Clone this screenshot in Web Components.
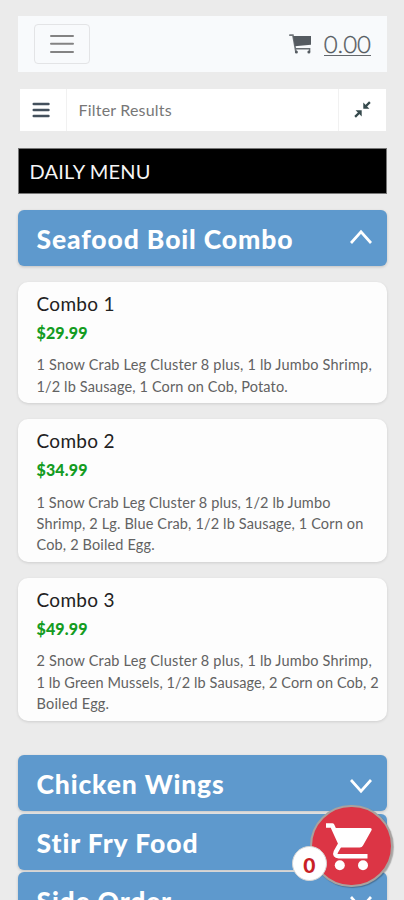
<!DOCTYPE html>
<html lang="en">
<head>
<meta charset="utf-8">
<title>Daily Menu</title>
<style>
html,body{margin:0;height:900px;overflow:hidden}
body{background:#ebebeb;font-family:Lato,"Open Sans",sans-serif}
</style>
</head>
<body>
<menu-page>
  <nav-bar total="0.00"></nav-bar>
  <filter-bar>Filter Results</filter-bar>
  <menu-title>DAILY MENU</menu-title>
  <menu-section open style="--ls:.87px">Seafood Boil Combo</menu-section>
  <menu-item name="Combo 1" price="$29.99">
    <text-line style="--ls:.2px">1 Snow Crab Leg Cluster 8 plus, 1 lb Jumbo Shrimp,</text-line>
    <text-line style="--ls:.13px">1/2 lb Sausage, 1 Corn on Cob, Potato.</text-line>
  </menu-item>
  <menu-item name="Combo 2" price="$34.99">
    <text-line style="--ls:.12px">1 Snow Crab Leg Cluster 8 plus, 1/2 lb Jumbo</text-line>
    <text-line style="--ls:.15px">Shrimp, 2 Lg. Blue Crab, 1/2 lb Sausage, 1 Corn on</text-line>
    <text-line style="--ls:.15px">Cob, 2 Boiled Egg.</text-line>
  </menu-item>
  <menu-item name="Combo 3" price="$49.99">
    <text-line style="--ls:.2px">2 Snow Crab Leg Cluster 8 plus, 1 lb Jumbo Shrimp,</text-line>
    <text-line style="--ls:.09px">1 lb Green Mussels, 1/2 lb Sausage, 2 Corn on Cob, 2</text-line>
    <text-line style="--ls:.2px">Boiled Egg.</text-line>
  </menu-item>
  <menu-section class="first" style="--ls:.85px">Chicken Wings</menu-section>
  <menu-section class="next" style="--ls:.93px">Stir Fry Food</menu-section>
  <menu-section class="next" style="--ls:.8px">Side Order</menu-section>
  <cart-button slot="float">0</cart-button>
</menu-page>
<script>
const define = (name, html, setup) => customElements.define(name, class extends HTMLElement {
  connectedCallback() {
    if (this.shadowRoot) return;
    const t = document.createElement('template');
    t.innerHTML = html;
    this.attachShadow({mode: 'open'}).append(t.content.cloneNode(true));
    if (setup) setup(this, this.shadowRoot);
  }
});

define('menu-page', `<style>
:host{display:block;position:relative;height:900px;overflow:hidden}
main{display:flex;flex-direction:column;padding:16px 17.5px 0 18px}
::slotted(*){flex:none}
::slotted(filter-bar){margin:16.6px 1px 0 1.5px}
::slotted(menu-title){margin-top:17px}
::slotted(menu-section){margin-top:16.4px}
::slotted(menu-item){margin-top:16px}
::slotted(menu-section.first){margin-top:34.4px}
::slotted(menu-section.next){margin-top:2.7px}
</style><main><slot></slot></main><slot name="float"></slot>`);

define('nav-bar', `<style>
:host{display:flex;align-items:center;justify-content:space-between;box-sizing:border-box;height:56px;padding:0 15.5px 0 16px;background:#f8fafc}
button{display:flex;align-items:center;justify-content:center;box-sizing:border-box;width:56px;height:40px;padding:0;border:1px solid #e3e4e6;border-radius:4px;background:none}
.cart{display:flex;align-items:center;gap:12px;color:#555b61}
.total{font-size:24px;line-height:22px;font-weight:300;-webkit-text-stroke:.3px #555b61;border-bottom:1.3px solid #63676c;position:relative;top:.5px}
svg{display:block}
</style>
<button aria-label="Menu"><svg width="24" height="20" viewBox="0 0 24 20" stroke="#838383" stroke-width="2" stroke-linecap="round"><path d="M1 2h22M1 9.7h22M1 18h22"/></svg></button>
<div class="cart"><svg width="23" height="20" viewBox="0 0 23 20" fill="none"><path d="M.8 1.2h3.1l3 16.6" stroke="#72777c" stroke-width="1.7" stroke-linecap="round"/><path d="M4.1 1.9H22v8.8L5.8 12.2z" fill="#555b61"/><path d="M6.4 14.8h14.2v3" stroke="#666c71" stroke-width="1.5"/><circle cx="7.4" cy="18" r="1.5" fill="#555b61"/><circle cx="19.9" cy="18" r="1.5" fill="#555b61"/></svg><span class="total"></span></div>`,
(el, r) => r.querySelector('.total').textContent = el.getAttribute('total'));

define('filter-bar', `<style>
:host{display:grid;grid-template-columns:46px 1fr 46.5px;height:42px;background:#fff}
div{display:flex;align-items:center;justify-content:center}
.list{padding-right:4px}
.field{justify-content:flex-start;padding-left:12px;border:solid #f1f1f1;border-width:0 1px;color:#777;font-size:16px;letter-spacing:.2px}
svg{display:block}
</style>
<div class="list"><svg width="18" height="16" viewBox="0 0 18 16" stroke="#43505c" stroke-width="2.4" stroke-linecap="round"><path d="M1.7 2h14.8M1.7 8h14.8M1.7 14h14.8"/></svg></div>
<div class="field"><slot></slot></div>
<div><svg width="17" height="17" viewBox="0 0 17 17" fill="none" stroke="#35494c" stroke-width="2"><path d="M15.9 1.1 11 6M1.1 15.9 6 11" stroke-width="2.3"/><path d="M9.3 1.6v6.1h6.1zM7.7 15.4V9.3H1.6z" fill="#35494c" stroke="none"/></svg></div>`);

define('menu-title', `<style>
:host{display:block;box-sizing:border-box;height:46px;padding-left:10.5px;background:#000;border:1px solid #777;color:#f5f5f5;font-size:20px;line-height:45px;letter-spacing:.2px}
</style><slot></slot>`);

define('menu-section', `<style>
:host{display:flex;align-items:center;justify-content:space-between;box-sizing:border-box;height:56px;padding:2px 15px 0 18.5px;border-radius:6px;background:#5e99cd;box-shadow:0 1px 3px rgba(0,0,0,.18);color:#fff;font-size:26.5px;font-weight:900;line-height:32px;letter-spacing:var(--ls)}
svg{display:block;margin-top:3px}
:host([open]) svg{transform:rotate(180deg);margin-top:-4px}
</style><span><slot></slot></span>
<svg width="22" height="16" viewBox="0 0 22 16" fill="none" stroke="#fff" stroke-width="2.7"><path d="M1 2l10 11.2L21 2"/></svg>`);

define('menu-item', `<style>
:host{display:flex;flex-direction:column;box-sizing:border-box;padding:9.9px 0 6.3px 18.5px;border-radius:10px;background:#fdfdfd;box-shadow:0 1px 3px rgba(0,0,0,.12)}
.name{color:#222;font-size:19px;line-height:24px;letter-spacing:.3px}
.price{margin-top:5.2px;color:#149c22;font-size:16px;line-height:24px;font-weight:900;letter-spacing:.15px}
.desc{display:flex;flex-direction:column;margin-top:9.4px}
</style><div class="name"></div><div class="price"></div><div class="desc"><slot></slot></div>`,
(el, r) => {
  r.querySelector('.name').textContent = el.getAttribute('name');
  r.querySelector('.price').textContent = el.getAttribute('price');
});

define('text-line', `<style>
:host{display:block;white-space:nowrap;color:#626262;font-size:14.5px;line-height:21.3px;letter-spacing:var(--ls)}
</style><slot></slot>`);

define('cart-button', `<style>
:host{position:absolute;left:310px;top:804.5px;width:82.5px;height:82.5px}
.disc{box-sizing:border-box;width:100%;height:100%;display:flex;align-items:center;justify-content:center;border:2px solid #a9a29f;border-radius:50%;background:#dc3545;box-shadow:1px 1px 1px rgba(0,0,0,.25)}
.badge{position:absolute;left:-18.5px;top:41px;box-sizing:border-box;width:35.5px;height:35.5px;display:flex;align-items:center;justify-content:center;border-radius:50%;border:1px solid #d5d5d5;background:#fff;color:#c91f26;font-size:21px;font-weight:900;line-height:1;padding-top:3px}
.disc svg{display:block;margin:2px 4px 0 0}
</style>
<div class="disc"><svg width="46" height="48" viewBox="0 0 46 48" fill="none"><path d="M0 2.5h6.2l8.3 18.2-4.7 8.2q-1.8 4 3 4.3h28.7" stroke="#fff" stroke-width="4.5" stroke-linejoin="round"/><path d="M6.5 5H44.2q2.2.2 1.2 2.5L37 22.5q-1 2-3.2 2H14.5z" fill="#fff"/><circle cx="13.8" cy="42.3" r="5" fill="#fff"/><circle cx="37" cy="42.3" r="5" fill="#fff"/></svg></div>
<div class="badge"><slot></slot></div>`);
</script>
</body>
</html>
